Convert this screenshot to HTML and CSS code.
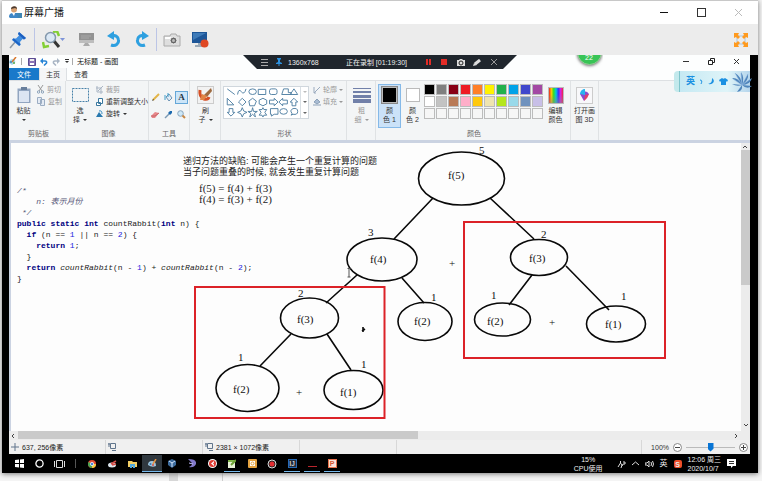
FILE: index.html
```html
<!DOCTYPE html>
<html lang="zh-CN">
<head>
<meta charset="utf-8">
<title>屏幕广播</title>
<link rel="stylesheet" href="styles.css">
</head>
<body>
<main class="window">
  <header class="titlebar">
    <svg class="app-icon" width="13" height="13" viewBox="0 0 13 13"><rect x="6" y="7" width="7" height="5" fill="#3f86b4"/><circle cx="5" cy="3.5" r="3" fill="#d9a273"/><path d="M2 3C2 0 8-1 8 3L6 2Z" fill="#4a3a30"/><path d="M0 11Q0 7 4 7Q9 7 9 11L8 12H1Z" fill="#3e86c6"/><path d="M3 7L5 10L6 7Z" fill="#fff"/></svg>
    <h1>屏幕广播</h1>
    <div class="window-buttons">
      <button aria-label="最小化"><svg width="9" height="9"><path d="M0 4.500H8" stroke="#111"/></svg></button>
      <button aria-label="最大化"><svg width="9" height="9"><rect x=".5" y=".5" width="8" height="8" fill="none" stroke="#333"/></svg></button>
      <button aria-label="关闭"><svg width="9" height="9"><path d="M1 1L8 8M8 1L1 8" stroke="#bbb"/></svg></button>
    </div>
  </header>

  <nav class="toolbar">
    <button class="pin" aria-label="固定"><svg width="18" height="18" viewBox="0 0 18 18"><path d="M7 10L1 17" stroke="#8c98a5" stroke-width="1.500"/><path d="M10 1L17 7L15 8.500L13.500 8L11 11L11.500 14L10 15L3 9L4 7.500L7 7.500L10 4.500L9 3Z" fill="#3f8de0"/><path d="M10 1L17 7L15 8.500L9 3Z" fill="#1d5fc0"/><path d="M4 8L11 14" stroke="#1d62c4" stroke-width="2"/></svg></button>
    <span class="divider"></span>
    <button class="magnify" aria-label="缩放"><svg width="24" height="18" viewBox="0 0 24 18"><path d="M11 1L15 0L17 5M1 11L2 16L7 15" fill="none" stroke="#83cf35" stroke-width="2.500"/><path d="M12 10L17 16" stroke="#333" stroke-width="3"/><circle cx="8.500" cy="6.500" r="5" fill="#dbe8f5" stroke="#8398ac" stroke-width="1.500"/><path d="M18 7H23L20.500 10Z" fill="#7d94d8"/></svg></button>
    <button aria-label="屏幕"><svg width="17" height="17" viewBox="0 0 17 17"><rect x="1" y="2" width="15" height="10" fill="#929292"/><rect x="1" y="9" width="15" height="3" fill="#bdbdbd"/><path d="M3 5H13M3 7H11" stroke="#a8a8a8"/><path d="M7 12H10L12 15H5Z" fill="#aaa"/></svg></button>
    <button aria-label="撤销"><svg width="16" height="17" viewBox="0 0 16 17"><path d="M5 14C10 16 13 12 12.500 9C12 5 9 4 6 5" fill="none" stroke="#2ea0e0" stroke-width="3"/><path d="M1 5L8 0V9Z" fill="#2ea0e0"/></svg></button>
    <button aria-label="重做"><svg width="16" height="17" viewBox="0 0 16 17"><path d="M11 14C6 16 3 12 3.500 9C4 5 7 4 10 5" fill="none" stroke="#2ea0e0" stroke-width="3"/><path d="M15 5L8 0V9Z" fill="#2ea0e0"/></svg></button>
    <span class="divider"></span>
    <button aria-label="截图"><svg width="18" height="14" viewBox="0 0 18 14"><path d="M1 3H7L8 1H13L14 3H17V13H1Z" fill="#dedede" stroke="#aaa"/><rect x="2" y="4" width="6" height="2" fill="#fff"/><circle cx="10.500" cy="7.500" r="3.500" fill="#666" stroke="#eee"/><circle cx="10.500" cy="7.500" r="1.500" fill="#bbb"/></svg></button>
    <button aria-label="录制"><svg width="18" height="17" viewBox="0 0 18 17"><rect x="1" y="1" width="15" height="11" fill="#1d5698"/><path d="M2 2H15L2 9Z" fill="#3f7bb8"/><path d="M7 12H10V14H13V16H4V14H7Z" fill="#9baab8"/><circle cx="13.500" cy="12.500" r="4" fill="#df4824"/></svg></button>
    <button class="fullscreen" aria-label="全屏"><svg width="14" height="14" viewBox="0 0 14 14"><rect x="3" y="3" width="8" height="8" fill="none" stroke="#a9c4dc"/><path d="M0 0H5L4 2L6 4L4 6L2 4L0 5ZM14 0H9L10 2L8 4L10 6L12 4L14 5ZM0 14H5L4 12L6 10L4 8L2 10L0 9ZM14 14H9L10 12L8 10L10 8L12 10L14 9Z" fill="#ff9a1e"/></svg></button>
  </nav>

  <section class="remote">
    <header class="paint-title">
      <svg class="paint-logo" width="8" height="9" viewBox="0 0 8 9"><path d="M0 6Q0 2 4 2Q7 3 6 6L3 8Z" fill="#a8d5ea"/><path d="M7 0L3 5" stroke="#d8762c" stroke-width="1.500"/><circle cx="2" cy="5" r="1" fill="#3b80b7"/><circle cx="5" cy="6" r="1" fill="#5eab4a"/></svg>
      <span class="thin"></span>
      <button aria-label="保存"><svg width="8" height="8" viewBox="0 0 8 8"><path d="M.5.500H7.500V7.500H.5Z" fill="#8b73b5" stroke="#5a4b91"/><rect x="2" y="1" width="4" height="2" fill="#eee"/><rect x="2" y="5" width="4" height="2" fill="#fff"/></svg></button>
      <button aria-label="撤销"><svg width="8" height="8" viewBox="0 0 8 8"><path d="M1 3H5Q7 3 6.500 5L4 7.500" fill="none" stroke="#2784d5" stroke-width="1.500"/><path d="M0 3L3 0V6Z" fill="#2784d5"/></svg></button>
      <button aria-label="重做"><svg width="8" height="8" viewBox="0 0 8 8"><path d="M7 3H3Q1 3 1.500 5L4 7.500" fill="none" stroke="#a9b5c4" stroke-width="1.500"/><path d="M8 3L5 0V6Z" fill="#a9b5c4"/></svg></button>
      <button class="narrow" aria-label="自定义"><svg width="4" height="5"><path d="M0 .5H4" stroke="#333"/><path d="M0 2H4L2 4Z" fill="#333"/></svg></button>
      <span class="thin"></span>
      <span class="doc-name">无标题 - 画图</span>
      <div class="paint-buttons">
        <button aria-label="最小化画图"><svg width="7" height="7"><path d="M0 3.500H6" stroke="#333"/></svg></button>
        <button aria-label="还原画图"><svg width="7" height="7"><path d="M.5 2.500H4.500V6.500H.5ZM2.500 2V.5H6.500V4.500H5" fill="none" stroke="#222"/></svg></button>
        <button aria-label="关闭画图"><svg width="7" height="7"><path d="M1 1L6 6M6 1L1 6" stroke="#333"/></svg></button>
      </div>
    </header>

    <div class="recorder">
      <svg width="7" height="7"><path d="M0 .5H7M0 3.500H7M0 6.500H7" stroke="#aaa"/></svg>
      <svg class="rec-pin" width="6" height="8"><path d="M1 0H5V1L4 2V4L6 5V6H0V5L2 4V2L1 1ZM2.500 6H3.500V8H2.500Z" fill="#2d91df"/></svg>
      <span class="resolution">1360x768</span>
      <span class="rec-time">正在录制 [01:19:30]</span>
      <svg width="5" height="6"><path d="M1 0V6M4 0V6" stroke="#e32c27" stroke-width="2"/></svg>
      <svg width="6" height="6"><rect width="6" height="6" fill="#e32c27"/></svg>
      <svg width="8" height="7"><path d="M0 1H2L3 0H5L6 1H8V7H0Z" fill="#ddd"/><circle cx="4" cy="4" r="2" fill="#ddd" stroke="#222"/></svg>
      <svg class="rec-pen" width="8" height="7"><path d="M0 7L1 4L4 6Z" fill="#ddd"/><path d="M2 5L7 1" stroke="#ddd" stroke-width="3"/></svg>
      <svg width="6" height="6"><path d="M0 0L6 6M6 0L0 6" stroke="#999"/></svg>
    </div>
    <div class="badge-clip"><span class="badge">22</span></div>
    <div class="ime">
      <span>英</span>
      <svg width="5" height="6"><path d="M1 1Q4 1 2 5" fill="none" stroke="#1c91e2"/></svg>
      <svg width="7" height="7"><path d="M4 0C8 3 5 7 0 6C4 5 4 3 4 0Z" fill="#1c91e2"/></svg>
      <svg width="9" height="7"><path d="M0 2L3 0Q4.500 1.500 6 0L9 2L8 4L7 3V7H2V3L1 4Z" fill="#1c91e2"/></svg>
      <svg class="flower" width="20" height="20" viewBox="0 0 20 20"><path d="M10 13L0 6Q6 5 10 13L3 1Q9 4 10 13L9 0Q13 6 10 13L16 2Q17 8 10 13L20 6Q18 13 10 13L20 14Q15 18 10 13L0 12Q5 15 10 13L5 20Q11 19 10 13Z" fill="#4f85bb"/><path d="M10 13L3 1M10 13L9 1M10 13L16 2M10 13L19 7M10 13L1 7" stroke="#82addd" stroke-width=".5"/></svg>
    </div>

    <nav class="tabs">
      <button class="file">文件</button><button class="current">主页</button><button>查看</button>
    </nav>

    <div class="ribbon">
      <section class="group clipboard">
        <div class="group-body">
          <button class="tall"><span class="pic"><svg width="14" height="17" viewBox="0 0 14 17"><rect x=".5" y="1.500" width="13" height="14.500" fill="#91a5c0"/><rect x="2" y="4" width="10" height="11" fill="#dce5f2"/><rect x="4" y="0" width="6" height="3" fill="#687f9c"/></svg></span>粘贴<i class="caret"></i></button>
          <div class="rows muted">
            <button><svg width="7" height="9"><path d="M1 0L5 6M6 0L2 6" stroke="#999"/><circle cx="1.500" cy="7" r="1.200" fill="none" stroke="#8ca3bb"/><circle cx="5.500" cy="7" r="1.200" fill="none" stroke="#8ca3bb"/></svg>剪切</button>
            <button><svg width="8" height="9"><path d="M.5.500H4.500V6.500H.5ZM3.500 2.500H7.500V8.500H3.500Z" fill="#e4ebf4" stroke="#9badc3"/></svg>复制</button>
          </div>
        </div>
        <h2>剪贴板</h2>
      </section>

      <section class="group image">
        <div class="group-body">
          <button class="tall"><span class="pic"><svg width="17" height="14"><rect x=".5" y=".5" width="16" height="13" fill="none" stroke="#4681a9" stroke-dasharray="2 1"/></svg></span>选<span>择<i class="caret"></i></span></button>
          <div class="rows">
            <button class="muted"><svg width="7" height="8"><path d="M1 0V6H7M0 2H5V8M7 0L2 5" fill="none" stroke="#a9b5c4"/></svg>裁剪</button>
            <button><svg width="7" height="8"><path d="M2.500.500H6.500V5.500H2.500ZM.5 4.500H4.500V7.500H.5Z" fill="#fff" stroke="#39779e"/></svg>重新调整大小</button>
            <button><svg width="7" height="8"><path d="M0 7H7L3 2Z" fill="#2879af"/><path d="M3 1Q6 0 6 4" fill="none" stroke="#338bc0"/></svg>旋转<i class="caret"></i></button>
          </div>
        </div>
        <h2>图像</h2>
      </section>

      <section class="group tools">
        <div class="group-body tool-grid">
          <button aria-label="铅笔"><svg width="8" height="9"><path d="M1 7L7 1" stroke="#e3b549" stroke-width="2"/><path d="M0 8L2 7L1 6Z" fill="#333"/></svg></button>
          <button aria-label="填充"><svg width="9" height="9"><path d="M2 4L5 1L8 5L5 8Z" fill="#dfecf7" stroke="#6d93b4"/><path d="M1 2V7M4 0V4" stroke="#3f9fcc"/></svg></button>
          <button class="active text-tool" aria-label="文本">A</button>
          <button aria-label="橡皮擦"><svg width="9" height="8"><path d="M0 5L4 1L8 2L4 7H1Z" fill="#e7878a"/><path d="M0 5L4 5L8 2" fill="none" stroke="#c76569"/></svg></button>
          <button aria-label="取色器"><svg width="9" height="9"><path d="M1 8L5 4" stroke="#7b99b4" stroke-width="1.500"/><path d="M4 3L6 5L8 3L8 1L6 1Z" fill="#1b69ae"/></svg></button>
          <button aria-label="放大镜"><svg width="9" height="9"><circle cx="3.500" cy="3.500" r="2.800" fill="#cee8f7" stroke="#8aa5bd"/><path d="M5.500 5.500L8 8" stroke="#c78846" stroke-width="2"/></svg></button>
        </div>
        <h2>工具</h2>
      </section>

      <section class="group brush">
        <div class="group-body"><button class="tall"><span class="pic"><svg width="17" height="18" viewBox="0 0 17 18"><rect x=".5" y=".5" width="16" height="17" fill="#f2f2f2" stroke="#ccc"/><path d="M3 4Q2 11 7 13Q11 14 12 11" fill="none" stroke="#d55026" stroke-width="3"/><path d="M7 9L14 2L15 5L10 11Z" fill="#9d6a40"/><path d="M5 8L10 10L7 14L3 14Z" fill="#e18445"/></svg></span>刷<span>子<i class="caret"></i></span></button></div>
      </section>

      <section class="group shapes">
        <div class="group-body">
          <div class="shape-box">
            <svg width="76" height="31" viewBox="0 0 80 33" fill="none" stroke="#4f7fa2"><path d="M3 2L11 8M14 8Q15 1 18 5T23 2M36 2.500H44V8H36ZM61 8L63 2H68V6H71V8ZM70 8L74 2L78 8ZM3 12V19H10ZM19 12L23 16L19 20L15 16ZM30 12L34 15L32 20H27L26 15ZM41 12L45 14V18L41 20L37 18V14ZM48 14H53V12L57 16L53 20V18H48ZM67 14H62V12L58 16L62 20V18H67ZM72 20V16H70L74 12L78 16H76V20ZM5 23H9V27H11L7 31L3 27H5ZM19 22L20.500 25.500L24 27L20.500 28.500L19 32L17.500 28.500L14 27L17.500 25.500ZM30 22L31 26H35L32 28L33 32L30 29L27 32L28 28L25 26H29ZM41 22L42 24H45L43 27L45 30H42L41 32L40 30H37L39 27L37 24H40Z"/><ellipse cx="30" cy="5" rx="4" ry="3"/><rect x="48" y="2" width="8" height="6" rx="2"/><path d="M49 23H57V29H53L50 31V29H49V23Z"/><ellipse cx="63" cy="26" rx="4" ry="3"/><path d="M71 30L72 28Q69 25 73 23Q78 22 78 26Q78 30 73 29Z"/></svg>
            <div class="shape-scroll"><i class="caret up"></i><i class="caret"></i><i class="caret"></i></div>
          </div>
          <div class="rows muted">
            <button><svg width="8" height="8"><path d="M1 7L7 1M1 1V7H3" fill="none" stroke="#9babbf"/></svg>轮廓<i class="caret"></i></button>
            <button><svg width="8" height="8"><path d="M1 4L4 1L7 4L4 6ZM0 7H8" fill="#a8bbd2" stroke="#8ba0b8"/></svg>填充<i class="caret"></i></button>
          </div>
        </div>
        <h2>形状</h2>
      </section>

      <section class="group weight muted">
        <div class="group-body"><button class="tall"><span class="pic"><svg width="18" height="16"><path d="M0 1.500H18" stroke="#7180a9"/><path d="M0 5H18" stroke="#7180a9" stroke-width="2"/><path d="M0 9.500H18" stroke="#7180a9" stroke-width="3"/><path d="M0 14H18" stroke="#7180a9" stroke-width="4"/></svg></span>粗<span>细<i class="caret"></i></span></button></div>
      </section>

      <section class="group colors">
        <div class="group-body">
          <button class="tall color-slot selected"><span class="pic"><i class="chip black"></i></span>颜<span>色 1</span></button>
          <button class="tall color-slot"><span class="pic"><i class="chip small"></i></span>颜<span>色 2</span></button>
          <div class="palette">
            <i class="c-black"></i><i class="c-gray"></i><i class="c-maroon"></i><i class="c-red"></i><i class="c-orange"></i><i class="c-yellow"></i><i class="c-green"></i><i class="c-blue"></i><i class="c-indigo"></i><i class="c-purple"></i>
            <i class="c-white"></i><i class="c-silver"></i><i class="c-brown"></i><i class="c-pink"></i><i class="c-gold"></i><i class="c-cream"></i><i class="c-lime"></i><i class="c-sky"></i><i class="c-steel"></i><i class="c-lilac"></i>
            <i></i><i></i><i></i><i></i><i></i><i></i><i></i><i></i><i></i><i></i>
          </div>
          <button class="tall edit-color"><span class="pic"><i class="rainbow"></i></span>编辑<span>颜色</span></button>
        </div>
        <h2>颜色</h2>
      </section>

      <section class="group three-d">
        <div class="group-body"><button class="tall"><span class="pic"><svg width="17" height="17" viewBox="0 0 17 17"><rect x=".5" y=".5" width="16" height="16" fill="#f8f8fa" stroke="#ccc"/><path d="M4 7A5 5 0 0 1 13 7L8 14Z" fill="#8a4bd1"/><path d="M4 7A5 5 0 0 1 9 2L9 8Z" fill="#27b4ee"/><path d="M9 8L13 7Q12 11 8 14Z" fill="#e14166"/></svg></span>打开画<span>图 3D</span></button></div>
      </section>
    </div>

    <div class="workspace">
      <div class="canvas">
        <svg class="tree" width="730" height="288" viewBox="11 143 730 288">
          <g class="ink">
            <ellipse cx="461.500" cy="178.500" rx="43" ry="26.500"/><ellipse cx="382" cy="259.500" rx="35" ry="21.500"/><ellipse cx="539" cy="257.500" rx="28.500" ry="18"/><ellipse cx="502.500" cy="319.500" rx="28" ry="16.500"/><ellipse cx="616" cy="324" rx="29.500" ry="18"/><ellipse cx="425" cy="321.500" rx="27" ry="19"/><ellipse cx="309.500" cy="318" rx="29" ry="20"/><ellipse cx="247.500" cy="388" rx="31.500" ry="23.500"/><ellipse cx="353.500" cy="390" rx="29.500" ry="19.500"/>
            <path d="M433 198L394 239M490 198L534 239M357 275L326 303M402 278L424 303M532 275L509 305M566 266L609 310M291 334L260 366M327 334L351 370M362 331L365 329M363 327V332"/>
          </g>
          <g class="marks"><rect x="464" y="222" width="201" height="136"/><rect x="195" y="287" width="189.500" height="131"/></g>
          <path d="M347.500 268.500H350.500M349 268.500V277M347.500 277H350.500" fill="none" stroke="#555"/>
          <g class="labels">
            <text x="448" y="179">f(5)</text><text x="370" y="263">f(4)</text><text x="529" y="262">f(3)</text><text x="487" y="325">f(2)</text><text x="605" y="328">f(1)</text><text x="414" y="325">f(2)</text><text x="297" y="323">f(3)</text><text x="233" y="393">f(2)</text><text x="340" y="396">f(1)</text>
            <text x="479" y="154">5</text><text x="368" y="236">3</text><text x="541" y="238">2</text><text x="431" y="301">1</text><text x="491" y="299">1</text><text x="621" y="300">1</text><text x="298" y="297">2</text><text x="238" y="361">1</text><text x="361" y="368">1</text>
            <text x="449" y="267">+</text><text x="549" y="326">+</text><text x="296" y="396">+</text>
          </g>
        </svg>
        <div class="note"><p>递归方法的缺陷: 可能会产生一个重复计算的问题</p><p>当子问题重叠的时候, 就会发生重复计算问题</p></div>
        <div class="formula"><p>f(5) = f(4) + f(3)</p><p>f(4) = f(3) + f(2)</p></div>
        <div class="code">
          <p><em>/*</em></p>
          <p><em>    n: 表示月份</em></p>
          <p><em> */</em></p>
          <p><b>public static int</b> countRabbit(<b>int</b> n) {</p>
          <p>  <b>if</b> (n == <span>1</span> || n == <span>2</span>) {</p>
          <p>    <b>return</b> <span>1</span>;</p>
          <p>  }</p>
          <p>  <b>return</b> <i>countRabbit</i>(n - <span>1</span>) + <i>countRabbit</i>(n - <span>2</span>);</p>
          <p>}</p>
        </div>
      </div>
      <div class="vscroll"><svg width="8" height="7"><path d="M2 5L4 3L6 5" fill="none" stroke="#444"/></svg><i></i><svg class="end" width="8" height="11"><path d="M2 4L4 6L6 4" fill="none" stroke="#444"/></svg></div>
    </div>
    <div class="hscroll"><svg width="9" height="9"><path d="M5 3L3 5L5 7" fill="none" stroke="#444"/></svg><i></i><svg class="end" width="20" height="9"><path d="M5 3L7 5L5 7" fill="none" stroke="#444"/></svg></div>

    <footer class="status">
      <span><svg width="8" height="8"><path d="M4 0V8M0 4H8" stroke="#60758c"/></svg>637, 256像素</span>
      <span><svg width="8" height="8"><path d="M2.500.500H7.500V5.500H2.500ZM0 1H2M1 0V4M4 7.500H8" fill="none" stroke="#60758c"/></svg></span>
      <span><svg width="8" height="8"><path d="M2.500.500H7.500V5.500H2.500ZM0 1H2M1 0V4M4 7.500H8" fill="none" stroke="#60758c"/></svg>2381 × 1072像素</span>
      <span></span>
      <div class="zoom">
        <label for="zoom">100%</label>
        <button aria-label="缩小"><svg width="9" height="9"><circle cx="4.500" cy="4.500" r="4" fill="#fff" stroke="#888"/><path d="M2 4.500H7" stroke="#444"/></svg></button>
        <input id="zoom" type="range" min="0" max="100" value="50">
        <button aria-label="放大"><svg width="9" height="9"><circle cx="4.500" cy="4.500" r="4" fill="#fff" stroke="#888"/><path d="M2 4.500H7M4.500 2V7" stroke="#444"/></svg></button>
      </div>
    </footer>

    <nav class="taskbar">
      <button aria-label="开始"><svg width="9" height="9"><path d="M0 1L4 .5V4H0ZM5 .4L9 0V4H5ZM0 5H4V8.500L0 8ZM5 5H9V9L5 8.600Z" fill="#fff"/></svg></button>
      <button aria-label="Cortana"><svg width="9" height="9"><circle cx="4.500" cy="4.500" r="3.600" fill="none" stroke="#fff" stroke-width="1.300"/></svg></button>
      <button aria-label="任务视图"><svg width="11" height="8"><path d="M2.500.500H8.500V7.500H2.500ZM.5 1V7M10.500 1V7" fill="none" stroke="#ddd"/></svg></button>
      <span class="task-line"></span>
      <button aria-label="Chrome"><svg width="8" height="8"><circle cx="4" cy="4" r="4" fill="#e44d37"/><path d="M4 4L.5 2A4 4 0 0 0 4 8Z" fill="#47a351"/><path d="M4 4H8A4 4 0 0 1 4 8Z" fill="#f7ca45"/><circle cx="4" cy="4" r="1.700" fill="#4b86de" stroke="#fff" stroke-width=".7"/></svg></button>
      <button aria-label="截图工具"><svg width="9" height="8"><ellipse cx="4" cy="5" rx="4" ry="2.500" fill="#dce5ed"/><path d="M3 4L8 1M4 5L8 4" stroke="#d44b45" stroke-width="1.500"/></svg></button>
      <button aria-label="文件管理器"><svg width="9" height="8"><path d="M0 1H4L5 2H9V7H0Z" fill="#f3ce65"/><path d="M2 4H7V8H5V6H4V8H2Z" fill="#4fa8de"/></svg></button>
      <button class="open lit" aria-label="画图"><svg width="9" height="9"><path d="M0 6Q0 2 4 2Q8 2 8 7Q4 9 0 6Z" fill="#9fc7e0"/><path d="M8 0L5 5" stroke="#e79342" stroke-width="1.500"/><circle cx="2.500" cy="5" r="1" fill="#3a77b5"/><circle cx="5" cy="6" r="1" fill="#d95349"/></svg></button>
      <button aria-label="VirtualBox"><svg width="8" height="9"><path d="M0 2L4 0L8 2V6L4 9L0 6Z" fill="#3c6b9d"/><path d="M1 2L4 4L7 2M4 4V8" fill="none" stroke="#d4e6fa"/></svg></button>
      <button aria-label="Navicat"><svg width="8" height="9"><path d="M0 0Q9 0 8 5Q6 9 1 8Q6 6 3 3Z" fill="#8279ca"/><path d="M1 4L5 5" stroke="#c0bbf2"/></svg></button>
      <button aria-label="浏览器"><svg width="9" height="9"><circle cx="4.500" cy="4.500" r="4.500" fill="#fff"/><circle cx="4.500" cy="4.500" r="3.500" fill="#df3d35"/><path d="M3 4.500L6 2V3.500L5 4.500L6 5.500V7Z" fill="#fff"/></svg></button>
      <button class="open" aria-label="记事本"><svg width="8" height="9"><rect y="1" width="7" height="8" fill="#e9f3d8"/><rect y="1" width="7" height="2" fill="#82b74a"/><path d="M3 6L8 1" stroke="#6da136" stroke-width="2"/></svg></button>
      <button aria-label="笔记"><svg width="9" height="9"><rect width="9" height="9" rx="1" fill="#e5a340"/><rect x="2" y="2" width="5" height="5" fill="#fff"/><circle cx="4.500" cy="4.500" r="1.500" fill="none" stroke="#e5a340"/></svg></button>
      <button aria-label="录屏"><svg width="10" height="10"><circle cx="5" cy="5" r="4" fill="#222" stroke="#ddd"/><circle cx="5" cy="5" r="2.500" fill="#e62f33"/></svg></button>
      <button class="open ide">IJ</button>
      <button class="open" aria-label="终端"><svg width="9" height="9"><path d="M0 7.500H9" stroke="#b9252d"/></svg></button>
      <button class="open ppt">P</button>
      <div class="tray">
        <span class="cpu">15%<br>CPU使用</span>
        <svg width="9" height="8"><path d="M3.500 1V3L1 7M3.500 3L5 5L4 8M6 2H8V4H6L5 6" fill="none" stroke="#ddd"/></svg>
        <svg width="7" height="5"><path d="M0 4L3.500 1L7 4" fill="none" stroke="#ddd"/></svg>
        <svg width="9" height="8"><path d="M0 3H2L4 1V7L2 5H0ZM6 2Q7 4 6 6M7.500 1Q9.500 4 7.500 7" fill="none" stroke="#ddd"/></svg>
        <span class="lang">英</span>
        <span class="sogou">S</span>
        <span class="clock">12:06 周三<br>2020/10/7</span>
        <svg width="9" height="9"><path d="M0 0H9V7H6L4 9V7H0Z" fill="#fff"/><path d="M2 2.500H7M2 4.500H7" stroke="#333"/></svg>
      </div>
    </nav>
  </section>
</main>
</body>
</html>
```
FILE: styles.css
```css
* { box-sizing: border-box; }
html, body { height: 100%; }
body {
  margin: 0;
  padding: 0 4px 8px 2px;
  overflow: hidden;
  font: 7px/9px "Liberation Sans", "Noto Sans CJK SC", sans-serif;
  color: #333;
  background:
    linear-gradient(90deg, transparent 169px, #d8d8d8 169px, #d8d8d8 178px, transparent 178px, transparent 222px, #ccc 222px, #ccc 223px, transparent 223px) bottom / 100% 8px no-repeat,
    #f5f5f5;
}
button {
  display: flex;
  align-items: center;
  justify-content: center;
  margin: 0;
  padding: 0;
  border: 0;
  background: none;
  font: inherit;
  color: inherit;
}
svg { display: block; flex: none; }
h1, h2, p { margin: 0; font: inherit; }

.window {
  display: flex;
  flex-direction: column;
  height: 100%;
  border-top: 1px solid #c8c8c8;
  background: #fff;
  box-shadow: 0 1px 5px #777;
}
.titlebar { display: flex; align-items: center; height: 23px; padding-left: 7px; gap: 2px; flex: none; }
.titlebar h1 { font-size: 10px; line-height: 14px; color: #111; }
.window-buttons { display: flex; margin-left: auto; padding-right: 1px; }
.window-buttons button { width: 37px; height: 22px; }

.toolbar { display: flex; align-items: center; height: 31px; background: #ececec; flex: none; }
.toolbar button { width: 28px; height: 31px; }
.toolbar .pin { width: 32px; }
.toolbar .magnify { width: 36px; }
.toolbar .fullscreen { margin: 0 3px 0 auto; }
.divider { width: 1px; height: 23px; margin-right: 1px; background: #bcc5e6; }

.remote {
  position: relative;
  display: flex;
  flex-direction: column;
  flex: 1;
  min-height: 0;
  border: solid #000;
  border-width: 0 8px 0 7px;
  background: #fdfefe;
}
.paint-title { display: flex; align-items: center; height: 13px; flex: none; }
.paint-title button { width: 12px; height: 13px; }
.paint-title .narrow { width: 9px; }
.thin { width: 1px; height: 7px; margin: 0 4px; background: #aaa; }
.paint-title .narrow + .thin { margin: 0 4px 0 1px; }
.doc-name { color: #111; }
.paint-buttons { display: flex; margin-left: auto; padding-right: 1px; }
.paint-buttons button { width: 25px; }

.recorder {
  position: absolute;
  top: 0;
  left: 234px;
  display: flex;
  align-items: center;
  width: 274px;
  height: 14px;
  padding: 0 20px 0 18px;
  gap: 10px;
  color: #eee;
  background: #20262d;
  clip-path: polygon(0 0, 100% 0, 260px 100%, 14px 100%);
}
.recorder .resolution { margin-left: -4px; }
.recorder .rec-time { margin: 0 9px 0 auto; white-space: nowrap; }
.recorder .rec-pin, .recorder .rec-pen { margin-left: -2px; }
.badge-clip { position: absolute; top: 0; left: 566px; width: 28px; height: 14px; overflow: hidden; }
.badge {
  display: flex;
  align-items: flex-end;
  justify-content: center;
  width: 25px;
  height: 25px;
  margin: -15px auto 0;
  padding-bottom: 2px;
  border: 1px solid #9c9;
  border-radius: 50%;
  color: #fff;
  background: #38c456;
  box-shadow: 0 1px 3px #777;
}
.ime {
  position: absolute;
  top: 16px;
  right: 0;
  display: flex;
  align-items: center;
  width: 76px;
  height: 21px;
  padding-left: 12px;
  gap: 4px;
  border-radius: 4px 0 0 4px;
  color: #1c91e2;
  font-size: 9px;
  font-weight: bold;
  background: linear-gradient(90deg, #c3e9ec 5px, #7fc5cc 5px, #7fc5cc 6px, #c6e9f3 6px, #dff4f8 70%, #b5d5ec);
}
.ime .flower { margin-left: auto; }

.tabs { display: flex; height: 13px; flex: none; border-bottom: 1px solid #dde0e3; }
.tabs button { width: 28px; height: 12px; }
.tabs .file { width: 30px; color: #fff; background: #1979ca; }
.tabs .current { height: 13px; border: solid #dde0e3; border-width: 0 1px; background: #f5f6f7; }

.ribbon { display: flex; height: 59px; flex: none; background: #f3f5f6; }
.group { display: flex; flex-direction: column; padding: 3px 0 2px; border-right: 1px solid #dfe2e4; }
.group-body { display: flex; flex: 1; }
.group h2 { color: #666; text-align: center; }
.clipboard { width: 57px; padding-left: 3px; }
.image { width: 83px; padding-left: 3px; }
.tools { width: 41px; }
.brush { width: 31px; padding-left: 4px; }
.shapes { width: 126px; padding-left: 2px; }
.weight { width: 29px; padding-left: 2px; }
.colors { width: 195px; padding-left: 2px; }
.three-d { width: 28px; padding-left: 1px; }
.tall { flex-direction: column; justify-content: flex-start; width: 23px; height: 44px; white-space: nowrap; }
.three-d .tall, .weight .tall { width: 25px; }
.pic { display: flex; align-items: center; justify-content: center; height: 22px; }
.caret {
  display: inline-block;
  margin-left: 3px;
  border: solid transparent;
  border-width: 2px 2px 0;
  border-top-color: currentColor;
  vertical-align: middle;
}
.tall > .caret { margin: 4px 0 0; }
.muted { color: #999; }
.rows { display: flex; flex-direction: column; gap: 3px; margin: 1px 0 0 5px; }
.rows button { justify-content: flex-start; gap: 3px; height: 9px; white-space: nowrap; }
.clipboard .rows { margin-left: 2px; }
.rows .caret { margin-left: 0; }
.tool-grid { display: grid; grid-template-columns: repeat(3, 13px); grid-auto-rows: 13px; gap: 4px 0; padding-top: 7px; }
.tool-grid .text-tool { border: 1px solid #65a7d8; background: #cce5f8; color: #234; font: bold 9px/11px "Liberation Serif", serif; }
.shape-box { display: flex; width: 86px; height: 33px; margin-top: 2px; border: 1px solid #d0d7dd; background: #fff; }
.shape-scroll { display: flex; flex-direction: column; align-items: center; justify-content: space-around; flex: 1; border-left: 1px solid #d9dfe4; color: #666; }
.shape-scroll .caret { margin: 0; }
.shape-scroll .up { color: #bbb; }
.shapes .rows { margin-left: 4px; }
.shapes .rows button { gap: 2px; }
.selected { outline: 1px solid #85b9e8; outline-offset: -1px; background: #cbe2f8; }
.chip { width: 17px; height: 18px; border: 1px solid #888; background: #fff; }
.chip.black { background: #000; box-shadow: inset 0 0 0 1px #bbb; }
.chip.small { width: 14px; height: 14px; border-color: #bbb; }
.palette { display: grid; grid-template-columns: repeat(10, 12px); grid-auto-rows: 12px; }
.palette i { margin: 0 1px 1px 0; border: 1px solid #bcbcbc; background: #f6f6f6; }
.palette .c-black { background: #000; } .palette .c-gray { background: #7f7f7f; }
.palette .c-maroon { background: #880015; } .palette .c-red { background: #ed1c24; }
.palette .c-orange { background: #ff7f27; } .palette .c-yellow { background: #fff200; }
.palette .c-green { background: #22b14c; } .palette .c-blue { background: #00a2e8; }
.palette .c-indigo { background: #3f48cc; } .palette .c-purple { background: #a349a4; }
.palette .c-white { background: #fff; } .palette .c-silver { background: #c3c3c3; }
.palette .c-brown { background: #b97a57; } .palette .c-pink { background: #ffaec9; }
.palette .c-gold { background: #ffc90e; } .palette .c-cream { background: #efe4b0; }
.palette .c-lime { background: #b5e61d; } .palette .c-sky { background: #99d9ea; }
.palette .c-steel { background: #7092be; } .palette .c-lilac { background: #c8bfe7; }
.rainbow {
  width: 16px;
  height: 17px;
  border: 1px solid #bbb;
  background: linear-gradient(0deg, #8888, transparent 60%), linear-gradient(90deg, #e22, #fc0, #3d2, #0cd, #33f, #d2d, #e24);
}

.workspace { display: flex; flex: 1; min-height: 0; border: solid #cbd3e2; border-width: 3px 0 0 2px; }
.canvas { position: relative; flex: 1; overflow: hidden; background: #fdfdfd; color: #222; }
.ink { fill: none; stroke: #090909; stroke-width: 1.6px; }
.marks { fill: none; stroke: #dc2228; stroke-width: 2px; }
.labels { font: 11px "Liberation Serif", serif; fill: #111; }
.note { position: absolute; left: 172px; top: 13px; font-size: 9px; line-height: 11px; white-space: nowrap; }
.formula { position: absolute; left: 188px; top: 40px; font: 11px/11px "Liberation Serif", serif; white-space: nowrap; }
.code { position: absolute; left: 6px; top: 42px; font: 8px/11px "Liberation Mono", "Noto Sans CJK SC", monospace; }
.code p { height: 11px; white-space: pre; }
.code em { color: #555577; }
.code b { color: #000080; }
.code span { color: #2222dd; }
.vscroll { display: flex; flex-direction: column; width: 9px; background: #ececec; }
.vscroll i { flex: 0 1 47%; background: #cacaca; }
.vscroll .end, .hscroll .end { margin: auto 0 0 auto; }
.hscroll { display: flex; height: 9px; flex: none; background: #ececec; }
.hscroll i { flex: 0 1 54%; height: 8px; background: #cacaca; }

.status { display: flex; height: 14px; flex: none; background: #f0f0f0; }
.status > span { display: flex; align-items: center; width: 97px; padding-left: 2px; gap: 3px; border-right: 1px solid #d8d8d8; color: #222; }
.zoom { display: flex; align-items: center; margin-left: auto; padding: 0 2px 0 9px; gap: 4px; border-left: 1px solid #d8d8d8; }
.zoom input { width: 49px; height: 11px; margin: 0; appearance: none; background: linear-gradient(#bbb, #bbb) center / 100% 1px no-repeat; }
.zoom input::-webkit-slider-thumb { appearance: none; width: 6px; height: 9px; background: #0875d5; clip-path: polygon(0 0, 100% 0, 100% 70%, 50% 100%, 0 70%); }

.taskbar { display: flex; align-items: center; height: 19px; flex: none; color: #eee; background: #000; }
.taskbar button { width: 20px; height: 17px; border: solid transparent; border-width: 0 2px; }
.taskbar .open { box-shadow: inset 0 -1px #76b9ed; background: #000; border-width: 0; width: 16px; margin: 0 2px; }
.taskbar .lit { width: 20px; margin: 0; background: #30383f; }
.task-line { width: 1px; height: 9px; margin: 0 6px; background: #555; }
.taskbar .ide { color: #fff; background: linear-gradient(#222c3c, #222c3c) center / 7px 7px no-repeat, linear-gradient(#2769b5, #2769b5) center / 9px 9px no-repeat; }
.taskbar .ppt { color: #d85835; font-weight: bold; background: linear-gradient(#fbe3da, #fbe3da) center / 7px 7px no-repeat, linear-gradient(#e8704c, #e8704c) center / 9px 9px no-repeat; }
.tray { display: flex; align-items: center; gap: 6px; margin-left: auto; padding-right: 14px; white-space: nowrap; }
.cpu { margin-right: 8px; text-align: center; }
.lang { font-size: 8px; }
.sogou { width: 8px; height: 8px; border-radius: 2px; text-align: center; font-weight: bold; background: #ed4e29; }
```
